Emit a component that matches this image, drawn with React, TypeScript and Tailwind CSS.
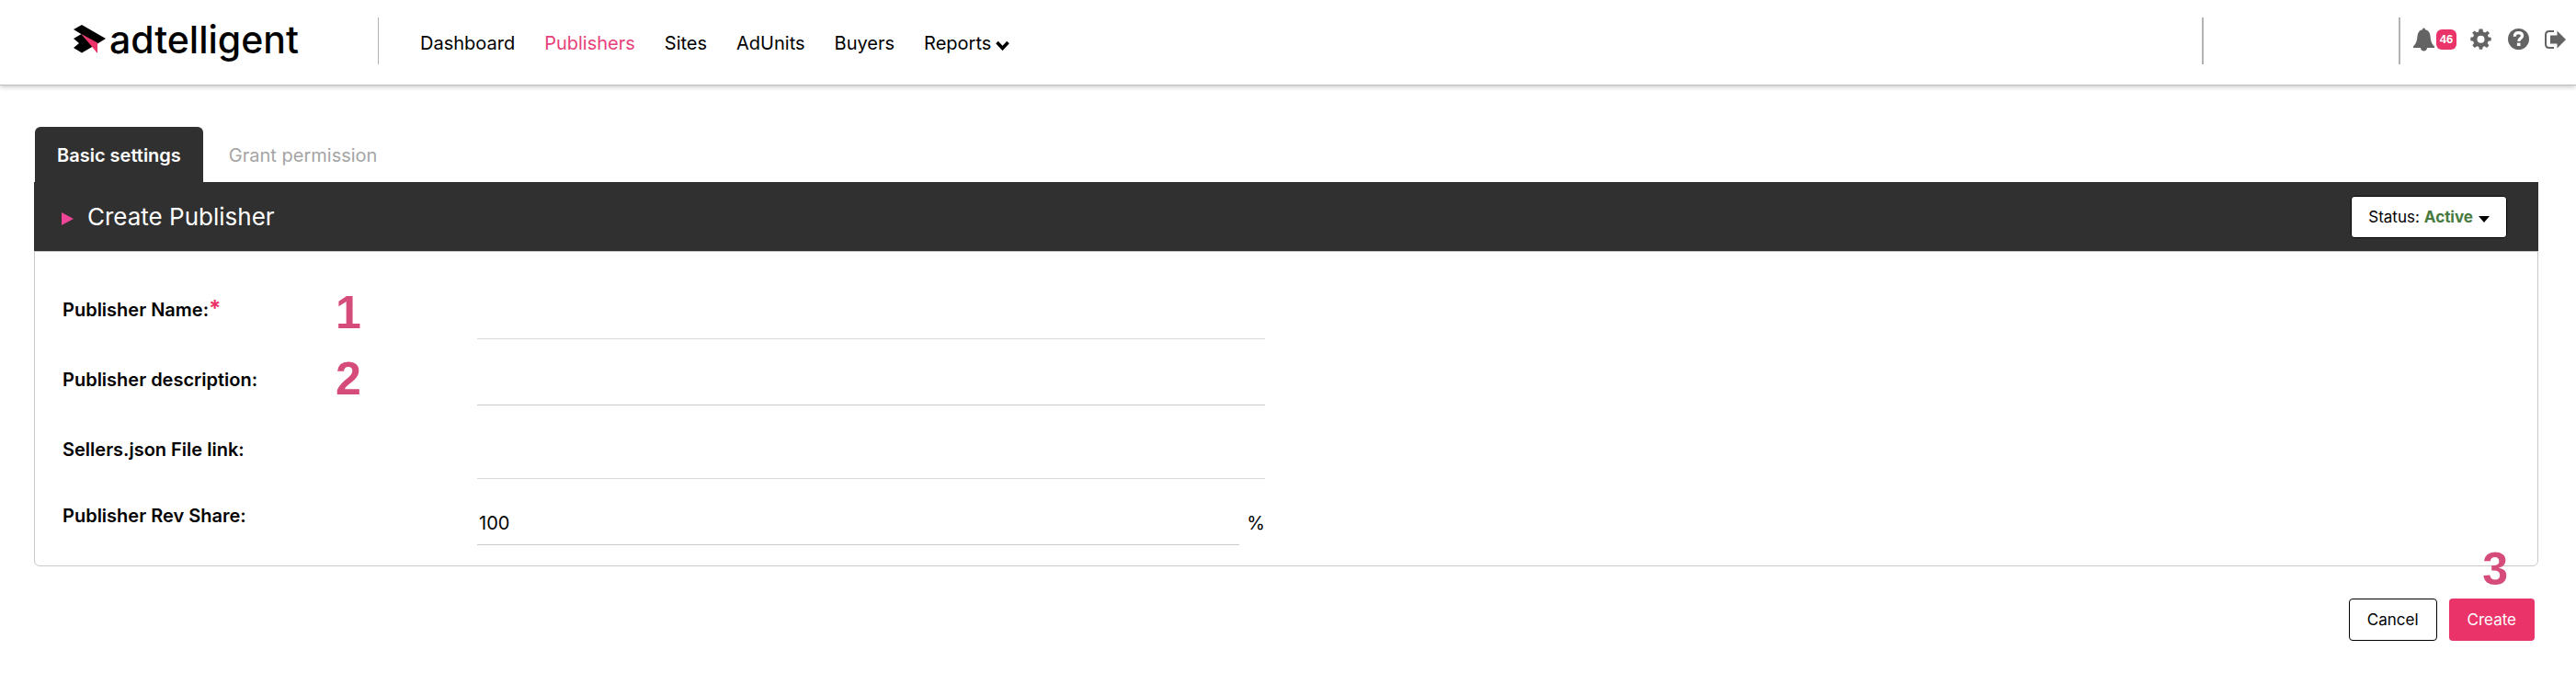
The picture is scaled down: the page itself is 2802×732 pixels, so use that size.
import { useState } from 'react';

const navLinks = [
  { label: 'Dashboard', active: false },
  { label: 'Publishers', active: true },
  { label: 'Sites', active: false },
  { label: 'AdUnits', active: false },
  { label: 'Buyers', active: false },
];

const LogoMark = () => (
  <svg width="35" height="31" viewBox="0 0 35 31" aria-hidden="true">
    <path d="M0 5L9 0L35 15L26 20.500L9 10.500Z" fill="#000" />
    <path d="M0 15L8.500 10L21 23.500L9 30.500L0 25L6 20Z" fill="#000" />
    <path d="M8.500 10L26 19.500V31Z" fill="#ea3368" />
  </svg>
);

const BellIcon = () => (
  <svg width="23" height="26" viewBox="0 0 23 26" fill="currentColor" aria-hidden="true">
    <path d="M11.500 0.500C12.500 0.500 13 1.200 13 2.300C16.500 3 18 5.500 18.500 9C19 14 19.500 17 23 20.500V22H0V20.500C3.500 17 4 14 4.500 9C5 5.500 6.500 3 10 2.300C10 1.200 10.500 0.500 11.500 0.500Z" />
    <path d="M8 22H15C15 24.300 13.500 25.500 11.500 25.500S8 24.300 8 22Z" />
  </svg>
);

const GearIcon = () => (
  <svg width="23" height="23" viewBox="0 0 24 24" fill="currentColor" aria-hidden="true">
    <path
      fillRule="evenodd"
      d="M10 0.500H14L14.600 3.700L16.900 4.700L19.600 2.800L22 5.200L19.700 7.500L20.700 9.800L23.700 10.200V13.800L20.500 14.400L19.500 16.700L21.300 19.300L18.800 21.800L16.200 20L14.300 20.800L13.700 23.700H10.300L9.700 20.800L7.600 20L5 21.800L2.400 19.200L4.200 16.700L3.300 14.400L0.300 13.800V10.200L3.300 9.700L4.200 7.400L2.200 5L4.700 2.500L7.300 4.500L9.400 3.700ZM12 8A4.200 4.200 0 1 0 12 16.400A4.200 4.200 0 1 0 12 8Z"
    />
  </svg>
);

const HelpIcon = () => (
  <svg width="23" height="23" viewBox="0 0 24 24" aria-hidden="true">
    <circle cx="12" cy="12" r="12" fill="currentColor" />
    <path d="M7.600 9C7.600 6 9.300 4.800 12 4.800C14.800 4.800 16.200 6.200 16.200 8.300C16.200 11.300 12.400 10.800 12.200 14.500" fill="none" stroke="#fff" strokeWidth="3.400" />
    <rect x="10.300" y="16.300" width="3.800" height="3.500" fill="#fff" />
  </svg>
);

const LogOutIcon = () => (
  <svg width="23" height="20" viewBox="0 0 23 20" aria-hidden="true">
    <path d="M10 1H5C2.500 1 1 2.500 1 5V15C1 17.500 2.500 19 5 19H10" fill="none" stroke="currentColor" strokeWidth="2" />
    <path d="M6 5.500H13.500V0.500L23 10L13.500 19.500V14.500H6Z" fill="currentColor" />
  </svg>
);

const Header = () => (
  <header className="flex h-[93px] items-center border-b border-[#bdbdbd] pb-[3px] pl-20 pr-[11px] shadow-[0_2px_5px_rgba(0,0,0,0.2)]">
    <a href="#" className="mb-1 flex items-center gap-1" aria-label="adtelligent">
      <LogoMark />
      <span className="text-[41px] leading-[44px] font-medium">adtelligent</span>
    </a>
    <div className="ml-[86px] h-[51px] w-px bg-[#b3b3b3]" />
    <nav className="mt-[5px] ml-[45px] flex flex-1 items-center gap-8 text-xl leading-6">
      {navLinks.map((link) => (
        <a key={link.label} href="#" className={link.active ? 'text-[#e8417a]' : 'text-black'}>
          {link.label}
        </a>
      ))}
      <button type="button" className="flex items-center gap-[5px]">
        Reports
        <svg width="15" height="11" viewBox="0 0 15 11" className="mt-1" aria-hidden="true">
          <path d="M1.500 2L7.500 8.500L13.500 2" fill="none" stroke="#000" strokeWidth="3.600" />
        </svg>
      </button>
    </nav>
    <div className="h-[51px] w-0.5 bg-[#b3b3b3]" />
    <div className="ml-[212px] h-[51px] w-0.5 bg-[#b3b3b3]" />
    <div className="mb-1 ml-3.5 flex items-center text-[#636363]">
      <button type="button" className="flex items-center gap-0.5" aria-label="Notifications">
        <BellIcon />
        <span className="flex h-[22px] w-[22px] items-center justify-center rounded-md bg-[#ea3368] font-['Liberation_Sans',Arial,sans-serif] text-[13px] font-bold text-white">
          46
        </span>
      </button>
      <button type="button" className="ml-[15px]" aria-label="Settings">
        <GearIcon />
      </button>
      <button type="button" className="ml-[18px]" aria-label="Help">
        <HelpIcon />
      </button>
      <button type="button" className="ml-[17px]" aria-label="Log out">
        <LogOutIcon />
      </button>
    </div>
  </header>
);

const Step = ({ value }: { value: number }) => (
  <span className="font-['Liberation_Sans',Arial,sans-serif] text-[50px] leading-none font-bold text-[#d54c7b]">
    {value}
  </span>
);

const rowClass = 'grid grid-cols-[451fr_857fr_1354fr] items-end';
const labelClass = 'w-[297px] text-xl leading-6 font-semibold';
const inputClass = 'h-12 w-full min-w-0 border-b bg-transparent pl-0.5 text-xl outline-none';

const App = () => {
  const [tab, setTab] = useState('basic');
  const [name, setName] = useState('');
  const [description, setDescription] = useState('');
  const [sellers, setSellers] = useState('');
  const [share, setShare] = useState('100');

  return (
    <div className="bg-white font-['Inter',sans-serif] text-black">
      <Header />

      <main className="pt-[45px] pr-[41px] pb-[35px] pl-[37px]">
        <div role="tablist" className="flex pl-px text-xl leading-6">
          <button
            type="button"
            role="tab"
            aria-selected={tab === 'basic'}
            onClick={() => setTab('basic')}
            className="h-[60px] rounded-t-md bg-[#303030] px-6 pt-0.5 font-semibold text-white"
          >
            Basic settings
          </button>
          <button
            type="button"
            role="tab"
            aria-selected={tab === 'grant'}
            onClick={() => setTab('grant')}
            className="h-[60px] px-7 pt-0.5 text-[#a5a5a5]"
          >
            Grant permission
          </button>
        </div>

        <form className="relative" onSubmit={(e) => e.preventDefault()}>
          <div className="flex h-[75px] items-center justify-between bg-[#303030] pr-[34px] pl-[30px]">
            <h1 className="flex items-center gap-[15px] text-[26px] text-white">
              <svg width="13" height="14" viewBox="0 0 13 14" className="mt-1" aria-hidden="true">
                <path d="M0 0L13 7L0 14Z" fill="#ee4596" />
              </svg>
              Create Publisher
            </h1>
            <button
              type="button"
              aria-haspopup="listbox"
              className="flex h-[46px] items-center rounded border border-black bg-white px-[18px] pt-0.5 text-[17px]"
            >
              Status:
              <span className="ml-[5px] font-bold text-[#487a40]">Active</span>
              <svg width="12" height="7" viewBox="0 0 12 7" className="mt-1 ml-1.5" aria-hidden="true">
                <path d="M0 0H12L6 7Z" fill="#000" />
              </svg>
            </button>
          </div>

          <div className="rounded-b-md border border-[#c9c9c9] px-[30px] pb-[22px]">
            <div className={`${rowClass} h-[95px]`}>
              <div className="flex items-end">
                <label htmlFor="name" className={`${labelClass} pb-5`}>
                  Publisher Name:<span className="text-2xl leading-none font-bold text-[#ea3368]">*</span>
                </label>
                <div className="pb-1">
                  <Step value={1} />
                </div>
              </div>
              <input id="name" value={name} onChange={(e) => setName(e.target.value)} className={`${inputClass} border-[#dadada]`} />
            </div>

            <div className={`${rowClass} h-[72px]`}>
              <div className="flex items-end">
                <label htmlFor="description" className={`${labelClass} pb-4`}>
                  Publisher description:
                </label>
                <div className="pb-1">
                  <Step value={2} />
                </div>
              </div>
              <input
                id="description"
                value={description}
                onChange={(e) => setDescription(e.target.value)}
                className={`${inputClass} border-[#c9c9c9]`}
              />
            </div>

            <div className={`${rowClass} h-20`}>
              <label htmlFor="sellers" className={`${labelClass} pb-5`}>
                Sellers.json File link:
              </label>
              <input id="sellers" value={sellers} onChange={(e) => setSellers(e.target.value)} className={`${inputClass} border-[#dadada]`} />
            </div>

            <div className={`${rowClass} h-[72px]`}>
              <label htmlFor="share" className={`${labelClass} pb-5`}>
                Publisher Rev Share:
              </label>
              <div className="flex items-center gap-2">
                <input id="share" value={share} onChange={(e) => setShare(e.target.value)} className={`${inputClass} border-[#c9c9c9]`} />
                <span className="text-xl">%</span>
              </div>
            </div>
          </div>

          <div className="absolute right-[33px] bottom-[53px] flex">
            <Step value={3} />
          </div>

          <div className="mt-[35px] flex justify-end gap-[13px] pr-1 text-[17px]">
            <button type="button" className="h-[46px] rounded border border-black bg-white px-[19px] pt-0.5">
              Cancel
            </button>
            <button type="submit" className="h-[46px] rounded bg-[#ea3368] px-5 pt-0.5 text-white">
              Create
            </button>
          </div>
        </form>
      </main>
    </div>
  );
};

export default App;
